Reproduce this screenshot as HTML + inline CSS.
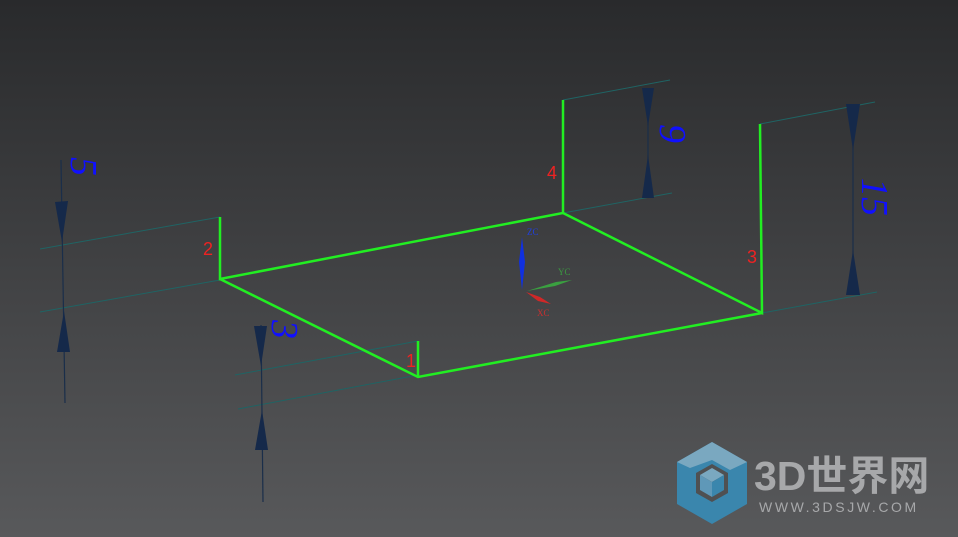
<!DOCTYPE html><html><head><style>body{margin:0;width:958px;height:537px;overflow:hidden;background:linear-gradient(#292a2c,#58595b)}</style></head><body>
<svg width="958" height="537" xmlns="http://www.w3.org/2000/svg" style="position:absolute;left:0;top:0">
<g stroke="#1f6464" stroke-width="1">
<line x1="40" y1="249" x2="220" y2="217"/><line x1="40" y1="312" x2="220" y2="280"/>
<line x1="235" y1="375" x2="418" y2="341"/><line x1="238" y1="409" x2="418" y2="375"/>
<line x1="563" y1="100" x2="670" y2="80"/><line x1="563" y1="213" x2="672" y2="193"/>
<line x1="760" y1="124" x2="875" y2="102"/><line x1="762" y1="313" x2="877" y2="292"/>
</g>
<g stroke="#1a2e4a" stroke-width="1.2">
<line x1="61" y1="160" x2="65" y2="403"/><line x1="261" y1="325" x2="263" y2="502"/>
<line x1="648" y1="88" x2="648" y2="198"/><line x1="853" y1="104" x2="853" y2="295"/>
</g>
<g fill="#15294a">
<polygon points="55,202 68,201 62,242"/><polygon points="57,352 70,352 64,311"/>
<polygon points="254,326 267,326 261,366"/><polygon points="255,450 268,450 262,410"/>
<polygon points="642,88 654,88 648,126"/><polygon points="642,198 654,198 648,155"/>
<polygon points="846,104 860,104 853,150"/><polygon points="846,295 860,295 853,250"/>
</g>
<g fill="#1010ff" font-family="'Liberation Serif',serif" font-style="italic" font-size="38">
<text transform="translate(71,157) rotate(90)">5</text>
<text transform="translate(272,320) rotate(90)">3</text>
<text transform="translate(660,124) rotate(90)">9</text>
<text transform="translate(862,178) rotate(90)">15</text>
</g>
<g stroke="#22ee22" stroke-width="2.5" fill="none">
<polyline points="220,217 220,279 563,213 563,100"/><polyline points="563,213 762,313 760,124"/>
<polyline points="220,279 418,377 762,313"/><line x1="418" y1="341" x2="418" y2="377"/>
</g>
<g fill="#ee2222" font-family="'Liberation Sans',sans-serif" font-size="18">
<text x="203" y="255">2</text><text x="547" y="179">4</text><text x="747" y="263">3</text><text x="406" y="367">1</text>
</g>
<polygon points="522,237 525,262 522,290 519,262" fill="#1030e0"/>
<polygon points="527,291 556,282 572,280 555,286" fill="#3aa040"/>
<polygon points="526,292 540,297 551,304 538,301" fill="#d02828"/>
<g font-family="'Liberation Serif',serif" font-size="9">
<text x="527" y="235" fill="#2040e0">ZC</text><text x="558" y="275" fill="#3a9a40">YC</text><text x="537" y="316" fill="#c83030">XC</text>
</g>
<g>
<polygon points="712,442 747,462 747,504 712,524 677,504 677,462" fill="#3a86ad"/>
<polygon points="712,442 747,462 730,470 712,460 690,468 677,462" fill="#7aa8c0"/>
<polygon points="696,473 712,464 728,473 728,493 712,502 696,493" fill="#4f5052"/>
<polygon points="700,475 712,468 724,475 712,482" fill="#7aa8c0"/>
<polygon points="700,475 712,482 712,497 700,490" fill="#5f98b8"/>
<polygon points="712,482 724,475 724,490 712,497" fill="#3a86ad"/>
</g>
<text x="754" y="490" fill="#a7a8aa" font-family="'Liberation Sans','Noto Sans CJK SC',sans-serif" font-weight="bold" font-size="41">3D世界网</text>
<text x="759" y="512" fill="#a7a8aa" font-family="'Liberation Sans',sans-serif" font-size="14" letter-spacing="2.6">WWW.3DSJW.COM</text>
</svg></body></html>
